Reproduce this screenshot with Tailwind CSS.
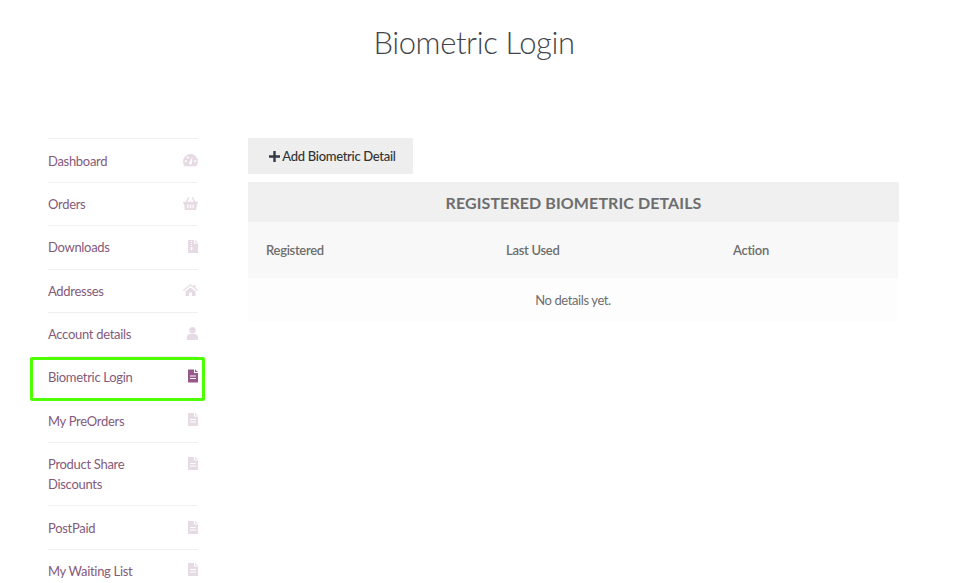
<!DOCTYPE html>
<html lang="en">
<head>
  <meta charset="UTF-8" />
  <title>Biometric Login</title>
  <script src="https://cdn.jsdelivr.net/npm/@tailwindcss/browser@4"></script>
</head>
<body class="bg-white overflow-hidden h-[583px] font-['Lato',sans-serif] text-[#6d6d6d]">
  <h1 class="pt-[21px] pr-[26px] h-[138px] text-center text-[31px] leading-[42px] tracking-[-0.4px] font-light text-[#43454b]">Biometric Login</h1>

  <div class="flex pl-[48px] gap-[50px]">
    <!-- account nav -->
    <nav class="relative w-[150px] shrink-0 text-[13px] leading-[20px] tracking-[-0.3px] text-[#845a7b]">
      <a class="flex justify-between h-[44px] pt-[12px] border-t border-[#f0f0f0]"><span>Dashboard</span>
        <svg class="w-[15px] h-[13px] mt-[3px] text-[#e6dbe4]" viewBox="0 0 16 14" fill="currentColor"><path d="M8 0a8 8 0 0 0-8 8c0 2 .7 3.800 1.800 5.200h12.400A8 8 0 0 0 16 8a8 8 0 0 0-8-8zM3 9a1.200 1.200 0 1 1 0-2.400A1.200 1.200 0 0 1 3 9zm2-4a1.200 1.200 0 1 1 0-2.400A1.200 1.200 0 0 1 5 5zm4.500 5.500a1.800 1.800 0 0 1-3 0c-.4-.8 0-1.600.7-2L10 3l-.4 6zM13 9a1.200 1.200 0 1 1 0-2.400A1.200 1.200 0 0 1 13 9z" fill-rule="evenodd"/></svg></a>
      <a class="flex justify-between h-[43px] pt-[11px] border-t border-[#f0f0f0]"><span>Orders</span>
        <svg class="w-[15px] h-[13px] mt-[3px] text-[#e6dbe4]" viewBox="0 0 16 14" fill="currentColor"><path d="M5.500 0 2.700 5H0v2h1l1 7h12l1-7h1V5h-2.700L10.500 0 9.200.7 11.500 5h-7L6.800.7zM4.500 8h1.300v4H4.500zm2.800 0h1.400v4H7.300zm2.900 0h1.300v4h-1.300z" fill-rule="evenodd"/></svg></a>
      <a class="flex justify-between h-[44px] pt-[11px] border-t border-[#f0f0f0]"><span>Downloads</span>
        <svg class="w-[10px] h-[13px] mt-[3px] text-[#e6dbe4]" viewBox="0 0 10 13" fill="currentColor"><path d="M0 0h6v3.500h4V13H0zM3 1v1h1V1zm0 2v1h1V3zm0 2v1h1V5zm-.3 2v3h1.600V7zM7 0l3 2.500H7z" fill-rule="evenodd"/></svg></a>
      <a class="flex justify-between h-[43px] pt-[11px] border-t border-[#f0f0f0]"><span>Addresses</span>
        <svg class="w-[15px] h-[12px] mt-[3px] text-[#e6dbe4]" viewBox="0 0 15 12" fill="currentColor"><path d="M7.500 0 0 6l.8 1 6.700-5.400L14.200 7l.8-1-2.500-2V1h-2v1.400zM2.500 7.500 7.500 3.400l5 4.100V12H9V8.500H6V12H2.500z"/></svg></a>
      <a class="flex justify-between h-[44px] pt-[11px] border-t border-[#f0f0f0]"><span>Account details</span>
        <svg class="w-[11px] h-[13px] mt-[3px] text-[#e6dbe4]" viewBox="0 0 11 13" fill="currentColor"><circle cx="5.500" cy="3.200" r="3.200"/><path d="M0 13v-2.500C0 8.500 1.500 7 3 7h5c1.500 0 3 1.500 3 3.500V13z"/></svg></a>
      <a class="flex justify-between h-[43px] pt-[10px] border-t border-[#f0f0f0]"><span>Biometric Login</span>
        <svg class="w-[10px] h-[14px] mt-[2px] text-[#96588a]" viewBox="0 0 10 13" fill="currentColor"><path d="M0 0h6v3.500h4V13H0zM2 6v1h6V6zm0 2.500v1h6v-1zM7 0l3 2.500H7z" fill-rule="evenodd"/></svg></a>
      <a class="flex justify-between h-[43px] pt-[11px] border-t border-[#f0f0f0]"><span>My PreOrders</span>
        <svg class="w-[10px] h-[13px] mt-[2px] text-[#e6dbe4]" viewBox="0 0 10 13" fill="currentColor"><path d="M0 0h6v3.500h4V13H0zM2 6v1h6V6zm0 2.500v1h6v-1zM7 0l3 2.500H7z" fill-rule="evenodd"/></svg></a>
      <a class="flex justify-between h-[63px] pt-[11px] border-t border-[#f0f0f0]"><span class="w-[100px]">Product Share Discounts</span>
        <svg class="w-[10px] h-[13px] mt-[3px] text-[#e6dbe4]" viewBox="0 0 10 13" fill="currentColor"><path d="M0 0h6v3.500h4V13H0zM2 6v1h6V6zm0 2.500v1h6v-1zM7 0l3 2.500H7z" fill-rule="evenodd"/></svg></a>
      <a class="flex justify-between h-[44px] pt-[12px] border-t border-[#f0f0f0]"><span>PostPaid</span>
        <svg class="w-[10px] h-[13px] mt-[3px] text-[#e6dbe4]" viewBox="0 0 10 13" fill="currentColor"><path d="M0 0h6v3.500h4V13H0zM2 6v1h6V6zm0 2.500v1h6v-1zM7 0l3 2.500H7z" fill-rule="evenodd"/></svg></a>
      <a class="flex justify-between h-[44px] pt-[11px] border-t border-[#f0f0f0]"><span>My Waiting List</span>
        <svg class="w-[10px] h-[13px] mt-[2px] text-[#e6dbe4]" viewBox="0 0 10 13" fill="currentColor"><path d="M0 0h6v3.500h4V13H0zM2 6v1h6V6zm0 2.500v1h6v-1zM7 0l3 2.500H7z" fill-rule="evenodd"/></svg></a>
      <!-- annotation round the active item -->
      <div class="absolute left-[-18px] top-[219px] w-[175px] h-[44px] border-[3px] border-[#4dff00] rounded-[2px]"></div>
    </nav>

    <main class="w-[651px]">
      <button class="flex items-center justify-center w-[165px] h-[36px] pt-[1px] pl-[4px] bg-[#eeeeee] text-[13px] tracking-[-0.3px] text-[#333333] gap-[2px]">
        <svg class="w-[11px] h-[11px]" viewBox="0 0 11 11" fill="#333a45"><path d="M4.300 0h2.400v4.300H11v2.400H6.700V11H4.300V6.700H0V4.300h4.300z"/></svg>
        <span class="font-medium">Add Biometric Detail</span>
      </button>
      <h2 class="mt-[8px] h-[40px] bg-[#f0f0f0] text-center text-[16px] leading-[42px] font-bold tracking-[0.1px] text-[#6d6d6d]">REGISTERED BIOMETRIC DETAILS</h2>
      <div class="w-[650px]">
        <div class="grid grid-cols-[240px_227px_1fr] pl-[18px] pt-[2px] h-[56px] items-center bg-[#f8f8f8] text-[13px] tracking-[-0.3px] font-semibold text-[#6d6d6d]">
          <span>Registered</span><span>Last Used</span><span>Action</span>
        </div>
        <div class="h-[44px] pt-[2px] flex items-center justify-center bg-[#fdfdfd] text-[13px] tracking-[-0.4px]">No details yet.</div>
      </div>
    </main>
  </div>
</body>
</html>
